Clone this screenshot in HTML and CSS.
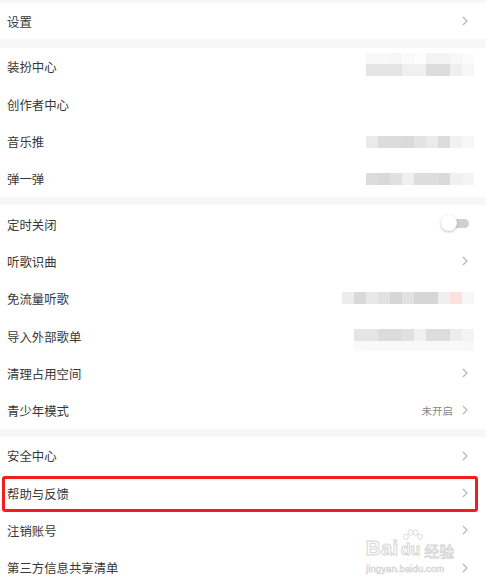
FILE: index.html
```html
<!DOCTYPE html>
<html lang="zh-CN">
<head>
    <meta charset="UTF-8">
    <meta name="viewport" content="width=device-width, initial-scale=1.0">
    <title>设置</title>
    <link rel="stylesheet" href="styles.css">
</head>
<body>
    <div class="page">
        <div class="group group-first">
            <div class="row row-short">
                <span class="label">设置</span>
                <svg class="chevron" viewBox="0 0 6 10"><polyline points="1,1 5,5 1,9"/></svg>
            </div>
        </div>

        <div class="group">
            <div class="row">
                <span class="label">装扮中心</span>
                <div class="mosaic mosaic-dress"></div>
            </div>
            <div class="row">
                <span class="label">创作者中心</span>
            </div>
            <div class="row">
                <span class="label">音乐推</span>
                <div class="mosaic mosaic-music"></div>
            </div>
            <div class="row">
                <span class="label">弹一弹</span>
                <div class="mosaic mosaic-danmu"></div>
            </div>
        </div>

        <div class="group">
            <div class="row">
                <span class="label">定时关闭</span>
                <div class="switch"><span class="knob"></span></div>
            </div>
            <div class="row">
                <span class="label">听歌识曲</span>
                <svg class="chevron" viewBox="0 0 6 10"><polyline points="1,1 5,5 1,9"/></svg>
            </div>
            <div class="row">
                <span class="label">免流量听歌</span>
                <div class="mosaic mosaic-free"></div>
            </div>
            <div class="row">
                <span class="label">导入外部歌单</span>
                <div class="mosaic mosaic-import"></div>
            </div>
            <div class="row">
                <span class="label">清理占用空间</span>
                <svg class="chevron" viewBox="0 0 6 10"><polyline points="1,1 5,5 1,9"/></svg>
            </div>
            <div class="row">
                <span class="label">青少年模式</span>
                <div class="extra">
                    <span class="status">未开启</span>
                    <svg class="chevron" viewBox="0 0 6 10"><polyline points="1,1 5,5 1,9"/></svg>
                </div>
            </div>
        </div>

        <div class="group group-last">
            <div class="row">
                <span class="label">安全中心</span>
                <svg class="chevron" viewBox="0 0 6 10"><polyline points="1,1 5,5 1,9"/></svg>
            </div>
            <div class="row row-marked">
                <span class="label">帮助与反馈</span>
                <svg class="chevron" viewBox="0 0 6 10"><polyline points="1,1 5,5 1,9"/></svg>
                <div class="highlight"></div>
            </div>
            <div class="row">
                <span class="label">注销账号</span>
                <svg class="chevron" viewBox="0 0 6 10"><polyline points="1,1 5,5 1,9"/></svg>
            </div>
            <div class="row">
                <span class="label">第三方信息共享清单</span>
                <svg class="chevron" viewBox="0 0 6 10"><polyline points="1,1 5,5 1,9"/></svg>
            </div>

            <!-- watermark -->
            <div class="watermark">
                <div class="wm-top">
                    <span class="wm-bai">Bai</span>
                    <span class="wm-du">
                        <svg class="wm-paw" viewBox="0 0 28 16">
                            <ellipse cx="6" cy="9" rx="2.6" ry="3.2"/>
                            <ellipse cx="11" cy="4" rx="2.6" ry="3.2"/>
                            <ellipse cx="17" cy="4" rx="2.6" ry="3.2"/>
                            <ellipse cx="22" cy="9" rx="2.6" ry="3.2"/>
                        </svg>
                        du
                    </span>
                    <span class="wm-jy">经验</span>
                </div>
                <div class="wm-url">jingyan.baidu.com</div>
            </div>
        </div>
    </div>
</body>
</html>
```

FILE: styles.css
```css
* {
    margin: 0;
    padding: 0;
    box-sizing: border-box;
}

body {
    font-family: "Noto Sans CJK SC", "Noto Sans", sans-serif;
    background: #f7f7f7;
    color: #333;
    overflow: hidden;
}

.page {
    width: 485px;
    height: 586px;
    overflow: hidden;
}

.group {
    background: #fff;
    margin-top: 8px;
    position: relative;
}

.group-first {
    margin-top: 3px;
    margin-bottom: 9px;
}

.row {
    height: 37.3px;
    display: flex;
    align-items: center;
    justify-content: space-between;
    padding: 0 17px 0 7px;
    position: relative;
}

.row-short {
    height: 36px;
}

.label {
    font-size: 12.4px;
    line-height: 1;
    color: #383838;
    padding-top: 2px;
}

.chevron {
    width: 6px;
    height: 10px;
    fill: none;
    stroke: #b4b4b4;
    stroke-width: 1.1;
}

.extra {
    display: flex;
    align-items: center;
    gap: 9px;
}

.status {
    font-size: 10.5px;
    color: #888;
    padding-top: 1px;
}

/* toggle */
.switch {
    position: relative;
    width: 25px;
    height: 9px;
    background: #d0d0d0;
    border-radius: 5px;
    margin-right: -1px;
}

.knob {
    position: absolute;
    left: -3px;
    top: -4px;
    width: 16px;
    height: 16px;
    border-radius: 50%;
    background: #fff;
    box-shadow: 0 1px 3px rgba(0,0,0,0.25);
}

/* blurred values */
.mosaic {
    margin-right: -6px;
}

.mosaic-dress {
    width: 108px;
    height: 23px;
    margin-top: -4px;
    background:
        linear-gradient(to right, #f8f8f8 0 24px, #f6f6f6 24px 36px, #fafafa 36px 48px, #fdfdfd 48px 60px, #f3f3f3 60px 84px, #f8f8f8 84px 96px, #fbfbfb 96px) top / 100% 11px no-repeat,
        linear-gradient(to right, #e4e4e4 0 36px, #f0f0f0 36px 60px, #dddddd 60px 84px, #efefef 84px 96px, #f6f6f6 96px) bottom / 100% 12px no-repeat;
}

.mosaic-music {
    width: 108px;
    height: 12px;
    margin-top: 2px;
    background: linear-gradient(to right, #eaeaea 0 12px, #dcdcdc 12px 36px, #dadada 36px 48px, #e3e3e3 48px 60px, #ebebeb 60px 72px, #dcdcdc 72px 84px, #f1f1f1 84px 96px, #f6f6f6 96px);
}

.mosaic-danmu {
    width: 108px;
    height: 12px;
    background: linear-gradient(to right, #dcdcdc 0 12px, #d9d9d9 12px 24px, #e0e0e0 24px 36px, #efefef 36px 48px, #dddddd 48px 72px, #dadada 72px 84px, #f0f0f0 84px 96px, #f4f4f4 96px);
}

.mosaic-free {
    width: 132px;
    height: 12px;
    background: linear-gradient(to right, #ececec 0 12px, #d9d9d9 12px 24px, #e8e8e8 24px 36px, #e2e2e2 36px 48px, #d6d6d6 48px 60px, #e2e2e2 60px 72px, #d6d6d6 72px 96px, #efefef 96px 108px, #fde0e0 108px 120px, #f6f6f6 120px);
}

.mosaic-import {
    width: 120px;
    height: 22px;
    margin-top: 8px;
    background:
        linear-gradient(to right, #e5e5e5 0 24px, #dcdcdc 24px 48px, #e0e0e0 48px 60px, #f0f0f0 60px 72px, #dddddd 72px 96px, #ededed 96px 108px, #f4f4f4 108px) top / 100% 12px no-repeat,
        linear-gradient(to right, #f9f9f9, #f8f8f8) bottom / 100% 10px no-repeat;
}

/* red annotation box */
.highlight {
    position: absolute;
    left: 2px;
    right: 7px;
    top: 2px;
    bottom: 0;
    border: 3px solid #f31d1d;
    border-radius: 3px;
}

/* watermark */
.watermark {
    position: absolute;
    left: 366px;
    top: 93px;
    width: 92px;
    color: #fff;
    font-family: "Liberation Sans", Arial, sans-serif;
}

.wm-top {
    display: flex;
    align-items: flex-end;
    height: 28px;
}

.wm-bai {
    font-size: 20px;
    font-weight: bold;
    line-height: 1;
    -webkit-text-stroke: 1px #d6d6d6;
    letter-spacing: 0.5px;
}

.wm-du {
    position: relative;
    font-size: 16px;
    font-weight: bold;
    line-height: 1;
    padding: 0 2px;
    -webkit-text-stroke: 1px #d6d6d6;
}

.wm-paw {
    position: absolute;
    left: 1px;
    top: -13px;
    width: 26px;
    height: 14px;
    fill: #fff;
    stroke: #d6d6d6;
    stroke-width: 1;
}

.wm-jy {
    font-family: "Noto Sans CJK SC", sans-serif;
    font-size: 15px;
    line-height: 1;
    margin-left: 2px;
    -webkit-text-stroke: 0.8px #d6d6d6;
}

.wm-url {
    font-size: 9.5px;
    margin-top: 5px;
    color: #fff;
    -webkit-text-stroke: 0.6px #d2d2d2;
    letter-spacing: 0.1px;
}
```
